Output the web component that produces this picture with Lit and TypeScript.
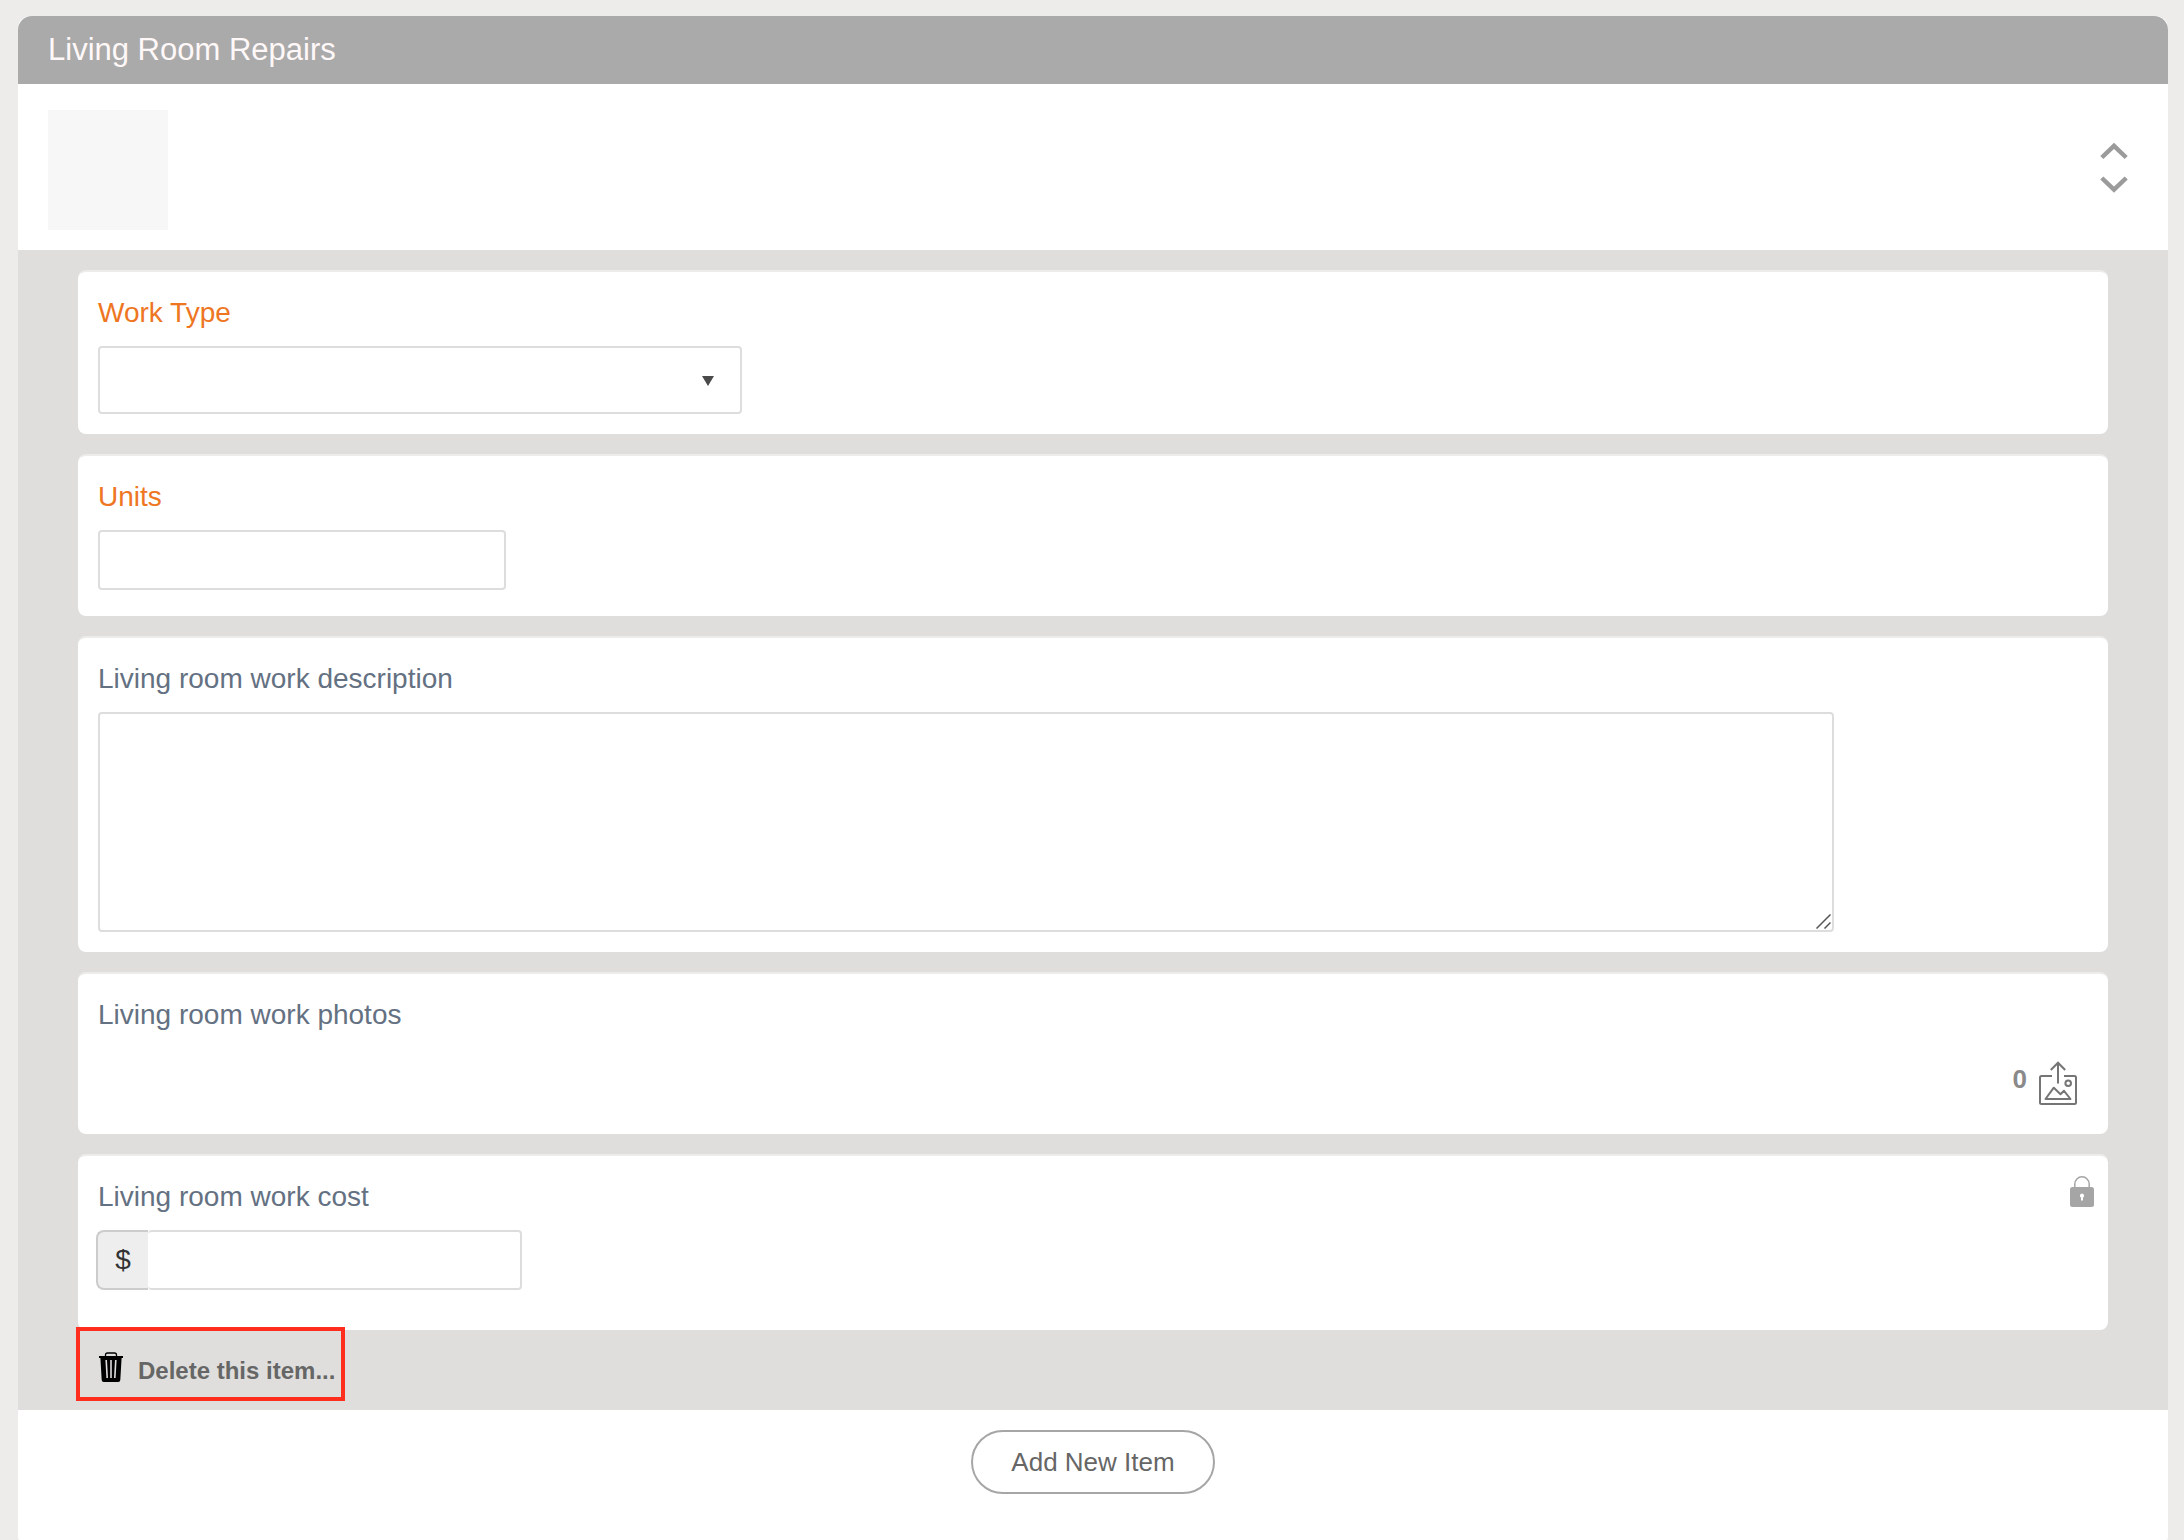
import { LitElement, html, css, svg } from "lit";
import { customElement } from "lit/decorators.js";

const chevronUp = svg`<svg width="28" height="18" viewBox="0 0 28 18" fill="none" stroke="#9b9b9b" stroke-width="4.500" aria-hidden="true"><path d="M1.800 15.500 14 3.800 26.200 15.500"/></svg>`;
const chevronDown = svg`<svg width="28" height="18" viewBox="0 0 28 18" fill="none" stroke="#9b9b9b" stroke-width="4.500" aria-hidden="true"><path d="M1.800 2 14 13.700 26.200 2"/></svg>`;

@customElement("app-root")
export class AppRoot extends LitElement {
  static styles = css`
    :host {
      display: flex;
      box-sizing: border-box;
      min-height: 100vh;
      padding: 16px 16px 0 18px;
      background: #edecea;
      font-family: "Liberation Sans", Arial, Helvetica, sans-serif;
      color: #666;
    }
    * { box-sizing: border-box; }
    button, input, select, textarea { font: inherit; color: inherit; margin: 0; }
    svg { display: block; }
    .panel {
      flex: 1;
      min-width: 0;
      background: #fff;
      border-radius: 12px 12px 2px 2px;
    }
    .title {
      margin: 0;
      padding: 0 30px;
      background: #aaa;
      border-radius: 14px 14px 0 0;
      color: #fff8f8;
      font-size: 31px;
      font-weight: 400;
      line-height: 68px;
    }
    .summary {
      display: flex;
      justify-content: space-between;
      align-items: flex-start;
      padding: 26px 40px 20px 30px;
    }
    .thumb { width: 120px; height: 120px; background: #f7f7f7; }
    .order { display: flex; flex-direction: column; gap: 16px; padding-top: 32px; }
    .order button, .upload {
      display: block;
      padding: 0;
      border: 0;
      background: none;
      cursor: pointer;
    }
    .fields {
      display: flex;
      flex-direction: column;
      gap: 20px;
      padding: 20px 60px 9px;
      background: #dfdedc;
    }
    .card {
      padding: 20px;
      background: #fff;
      border-top: 2px solid #edecea;
      border-radius: 8px;
    }
    .units { padding-bottom: 26px; }
    .photos { padding: 20px 31px 29px 20px; }
    .cost { padding-bottom: 40px; }
    .label {
      display: block;
      margin-bottom: 12px;
      color: #647182;
      font-size: 28px;
      line-height: 42px;
    }
    .required { color: #ee7623; }
    .control {
      display: block;
      height: 60px;
      padding: 0 16px;
      background: #fff;
      border: 2px solid #ddd;
      border-radius: 4px;
      font-size: 28px;
    }
    .short { width: 408px; }
    .picker { display: grid; width: 644px; max-width: 100%; align-items: center; }
    .picker > *, .area > * { grid-area: 1 / 1; }
    .picker select { width: 100%; height: 68px; appearance: none; }
    .caret { justify-self: end; margin-right: 28px; pointer-events: none; }
    .area { display: grid; width: calc(100% - 254px); }
    .area textarea { width: 100%; height: 220px; }
    .area textarea::-webkit-resizer { background: none; }
    .grip { place-self: end; margin: 3px; pointer-events: none; }
    .upload-row {
      display: flex;
      justify-content: flex-end;
      align-items: center;
      gap: 12px;
      padding-top: 13px;
    }
    .count { padding-bottom: 8px; font-size: 26px; font-weight: 700; line-height: 36px; color: #8a8a8a; }
    .cost-head { display: flex; justify-content: space-between; align-items: flex-start; }
    .lock { margin-right: -6px; }
    .money { display: flex; margin-left: -2px; }
    .addon {
      display: flex;
      justify-content: center;
      align-items: center;
      width: 52px;
      background: #eee;
      border: 2px solid #ccc;
      border-right: 0;
      border-radius: 8px 0 0 8px;
      color: #333;
      font-size: 28px;
    }
    .amount { width: 374px; border-left: 0; }
    .delete {
      display: flex;
      align-items: center;
      gap: 15px;
      align-self: flex-start;
      height: 74px;
      margin: -23px 0 0 -2px;
      padding: 14px 6px 0 19px;
      background: none;
      border: 4px solid #ff2d1e;
      font-size: 24px;
      font-weight: 700;
      cursor: pointer;
    }
    .delete svg { margin-top: -8px; }
    .footer { display: flex; justify-content: center; padding: 20px; }
    .add {
      height: 64px;
      padding: 0 38px;
      background: #fff;
      border: 2px solid #a6a6a6;
      border-radius: 32px;
      font-size: 26px;
      cursor: pointer;
    }
  `;

  render() {
    return html`
      <main class="panel">
        <h1 class="title">Living Room Repairs</h1>
        <div class="summary">
          <div class="thumb"></div>
          <div class="order">
            <button type="button">${chevronUp}</button>
            <button type="button">${chevronDown}</button>
          </div>
        </div>
        <form class="fields">
          <section class="card">
            <label class="label required" for="type">Work Type</label>
            <div class="picker">
              <select class="control" id="type"><option></option></select>
              <svg class="caret" width="12" height="12" viewBox="0 0 12 12" fill="#4a4a4a"><path d="M0 2H12L6 12Z"/></svg>
            </div>
          </section>
          <section class="card units">
            <label class="label required" for="units">Units</label>
            <input class="control short" id="units" type="text" />
          </section>
          <section class="card">
            <label class="label" for="description">Living room work description</label>
            <div class="area">
              <textarea class="control" id="description"></textarea>
              <svg class="grip" width="15" height="15" viewBox="0 0 15 15" fill="none" stroke="#555" stroke-width="1.500"><path d="M.5 14.500 14.500.5M8.500 14.500 14.500 8.500"/></svg>
            </div>
          </section>
          <section class="card photos">
            <label class="label" for="photos">Living room work photos</label>
            <div class="upload-row">
              <span class="count">0</span>
              <button class="upload" id="photos" type="button">
                <svg width="38" height="44" viewBox="0 0 38 44" fill="none" stroke="#757575" stroke-width="2">
                  <path d="M13 15H2.500Q1 15 1 16.500V41.500Q1 43 2.500 43H35.500Q37 43 37 41.500V16.500Q37 15 35.500 15H25"/>
                  <path d="M19 22.500V2M11.800 9 19 1.700 26.200 9"/>
                  <circle cx="29.200" cy="22.300" r="2.800"/>
                  <path d="M6.500 38 14.800 26.700 21.500 33.300 25 29.800 31.500 38Z" stroke-linejoin="round"/>
                </svg>
              </button>
            </div>
          </section>
          <section class="card cost">
            <div class="cost-head">
              <label class="label" for="cost">Living room work cost</label>
              <svg class="lock" width="24" height="31" viewBox="0 0 24 31">
                <path d="M4.800 12V8A7.200 7.200 0 0 1 19.200 8V12" fill="none" stroke="#a5a5a5" stroke-width="1.500"/>
                <rect y="11" width="24" height="20" rx="2.500" fill="#a5a5a5"/>
                <path d="M12 17.500A2.200 2.200 0 0 1 13 21.600V24.500H11V21.600A2.200 2.200 0 0 1 12 17.500Z" fill="#fff"/>
              </svg>
            </div>
            <div class="money">
              <span class="addon">$</span>
              <input class="control amount" id="cost" type="text" />
            </div>
          </section>
          <button class="delete" type="button">
            <svg width="24" height="30" viewBox="0 0 24 30">
              <path d="M6.500 5V3Q6.500 1 8.500 1H15.500Q17.500 1 17.500 3V5" fill="none" stroke="#000" stroke-width="1.300"/>
              <path d="M0 4H24V6H22.600L21.300 28Q21.200 30 19.200 30H4.800Q2.800 30 2.700 28L1.400 6H0Z"/>
              <path d="M7.200 8 8.200 26M12 8V26M16.800 8 15.800 26" fill="none" stroke="#dfdedc" stroke-width="1.600"/>
            </svg>
            Delete this item...
          </button>
        </form>
        <div class="footer"><button class="add" type="button">Add New Item</button></div>
      </main>
    `;
  }
}
